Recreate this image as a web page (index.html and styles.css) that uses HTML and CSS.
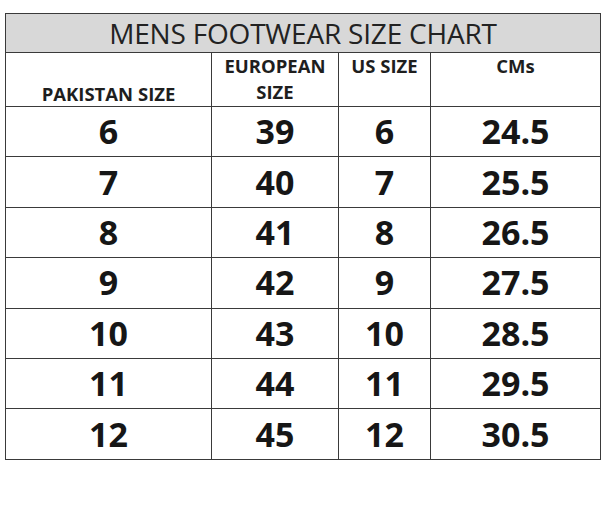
FILE: index.html
```html
<!DOCTYPE html>
<html lang="en">
<head>
<meta charset="utf-8">
<title>Mens Footwear Size Chart</title>
<link rel="stylesheet" href="styles.css">
</head>
<body>
<table class="chart">
  <colgroup>
    <col class="c1"><col class="c2"><col class="c3"><col class="c4">
  </colgroup>
  <thead>
    <tr class="title-row"><th colspan="4">MENS FOOTWEAR SIZE CHART</th></tr>
    <tr class="head-row">
      <th class="bottom">PAKISTAN SIZE</th>
      <th>EUROPEAN<br>SIZE</th>
      <th>US SIZE</th>
      <th>CMs</th>
    </tr>
  </thead>
  <tbody>
    <tr><td>6</td><td>39</td><td>6</td><td>24.5</td></tr>
    <tr><td>7</td><td>40</td><td>7</td><td>25.5</td></tr>
    <tr><td>8</td><td>41</td><td>8</td><td>26.5</td></tr>
    <tr><td>9</td><td>42</td><td>9</td><td>27.5</td></tr>
    <tr><td>10</td><td>43</td><td>10</td><td>28.5</td></tr>
    <tr><td>11</td><td>44</td><td>11</td><td>29.5</td></tr>
    <tr><td>12</td><td>45</td><td>12</td><td>30.5</td></tr>
  </tbody>
</table>
</body>
</html>
```
FILE: styles.css
```css
html, body {
  margin: 0;
  padding: 0;
  background: #ffffff;
}
body {
  padding: 13px 0 0 5px;
  font-family: "Open Sans", "Liberation Sans", sans-serif;
  color: #1a1a1a;
}
.chart {
  border-collapse: collapse;
  table-layout: fixed;
  width: 595px;
}
.c1 { width: 206px; }
.c2 { width: 127px; }
.c3 { width: 92px; }
.c4 { width: 170px; }
.chart th, .chart td {
  border: 1.5px solid #3a3a3a;
  padding: 0;
  text-align: center;
}
.title-row th {
  height: 38px;
  background: #d8d8d8;
  font-weight: 400;
  font-size: 28px;
  line-height: 38px;
  color: #222;
  letter-spacing: -0.2px;
}
.head-row th {
  height: 53px;
  vertical-align: top;
  font-weight: 700;
  font-size: 18.5px;
  line-height: 26px;
  padding-top: 0;
  color: #1e1e1e;
}
.head-row th.bottom {
  vertical-align: bottom;
  padding: 0;
  line-height: 24px;
}
.chart td {
  height: 49.4px;
  font-weight: 700;
  font-size: 34px;
  line-height: 49px;
  color: #161616;
}
```
